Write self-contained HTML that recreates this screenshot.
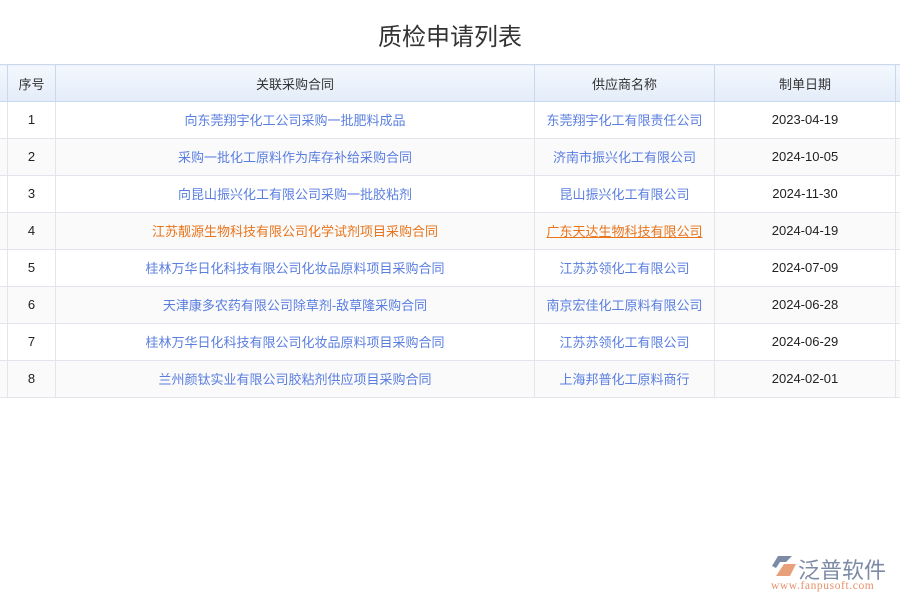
<!DOCTYPE html>
<html><head><meta charset="utf-8"><style>
*{margin:0;padding:0;box-sizing:border-box}
body{width:900px;height:600px;background:#fff;font-family:"Liberation Sans","Noto Sans CJK SC",sans-serif;position:relative;overflow:hidden}
h1{position:absolute;top:22px;left:0;width:900px;text-align:center;font-size:24px;line-height:32px;font-weight:normal;color:#333}
table{position:absolute;top:64px;left:-1px;width:906px;border-collapse:collapse;font-size:13px;table-layout:fixed}
th{height:37px;background:linear-gradient(#f4f8fe,#e3ecf9);border:1px solid #c9d9ec;font-weight:normal;color:#333}
td{height:37px;border:1px solid #e2e6ec;text-align:center;color:#222;padding-bottom:2px}
tr.alt td{background:#fafafa}
td.l{color:#5a7ee0}
td.o{color:#e8741c}
td.o u{text-decoration:underline}
.logo{position:absolute;left:770px;top:554px}
</style></head><body>
<h1>质检申请列表</h1>
<table>
<colgroup><col style="width:8px"><col style="width:48px"><col style="width:479px"><col style="width:180px"><col style="width:181px"><col style="width:10px"></colgroup>
<tr><th></th><th>序号</th><th>关联采购合同</th><th>供应商名称</th><th>制单日期</th><th></th></tr>
<tr><td></td><td>1</td><td class="l">向东莞翔宇化工公司采购一批肥料成品</td><td class="l">东莞翔宇化工有限责任公司</td><td>2023-04-19</td><td></td></tr>
<tr class="alt"><td></td><td>2</td><td class="l">采购一批化工原料作为库存补给采购合同</td><td class="l">济南市振兴化工有限公司</td><td>2024-10-05</td><td></td></tr>
<tr><td></td><td>3</td><td class="l">向昆山振兴化工有限公司采购一批胶粘剂</td><td class="l">昆山振兴化工有限公司</td><td>2024-11-30</td><td></td></tr>
<tr class="alt"><td></td><td>4</td><td class="o">江苏靓源生物科技有限公司化学试剂项目采购合同</td><td class="o"><u>广东天达生物科技有限公司</u></td><td>2024-04-19</td><td></td></tr>
<tr><td></td><td>5</td><td class="l">桂林万华日化科技有限公司化妆品原料项目采购合同</td><td class="l">江苏苏领化工有限公司</td><td>2024-07-09</td><td></td></tr>
<tr class="alt"><td></td><td>6</td><td class="l">天津康多农药有限公司除草剂-敌草隆采购合同</td><td class="l">南京宏佳化工原料有限公司</td><td>2024-06-28</td><td></td></tr>
<tr><td></td><td>7</td><td class="l">桂林万华日化科技有限公司化妆品原料项目采购合同</td><td class="l">江苏苏领化工有限公司</td><td>2024-06-29</td><td></td></tr>
<tr class="alt"><td></td><td>8</td><td class="l">兰州颜钛实业有限公司胶粘剂供应项目采购合同</td><td class="l">上海邦普化工原料商行</td><td>2024-02-01</td><td></td></tr>
</table>
<div class="logo">
<svg width="28" height="24" style="position:absolute;left:0;top:0" viewBox="0 0 28 24"><path d="M8 2 L22 2 L16 8 L10 8 L6 14 L2 12 Z" fill="#7d8aa6"/><path d="M14 10 L26 10 L20 22 L6 22 Z" fill="#e8a07a"/></svg>
<div style="position:absolute;left:28px;top:-1px;font-size:22px;color:#7d8aa6;white-space:nowrap">泛普软件</div>
<div style="position:absolute;left:1px;top:26px;font-size:11.5px;color:#e8906a;font-family:'Liberation Serif',serif;white-space:nowrap;letter-spacing:0.6px">www.fanpusoft.com</div>
</div>
</body></html>
